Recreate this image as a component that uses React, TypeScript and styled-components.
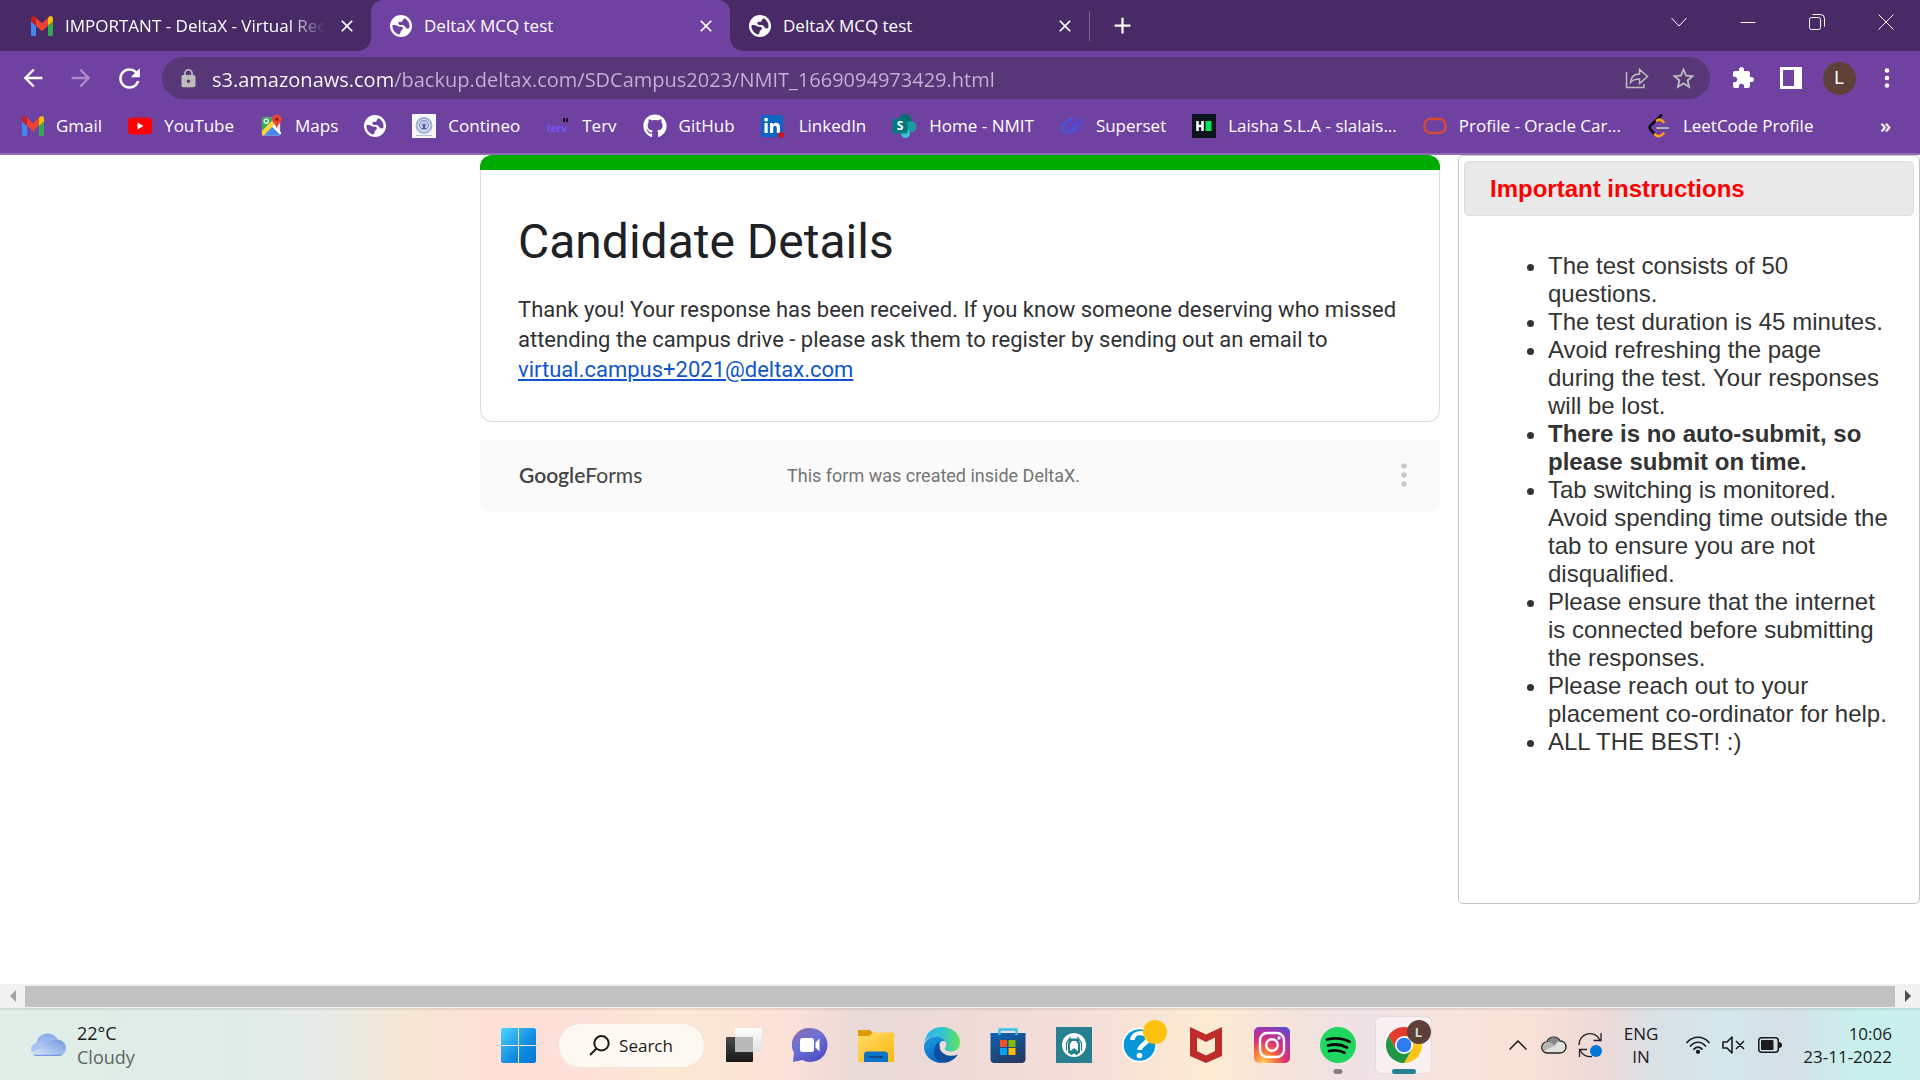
import React from 'react';
import styled, { createGlobalStyle } from 'styled-components';
import { FaGithub } from 'react-icons/fa';
import { MdExtension, MdStarBorder, MdArrowBack, MdArrowForward, MdRefresh, MdLock, MdClose, MdAdd } from 'react-icons/md';

const UI_FONT = '"Segoe UI", "Open Sans", "Noto Sans", sans-serif';

const GlobalStyle = createGlobalStyle`
  * { box-sizing: border-box; }
  html, body { margin: 0; padding: 0; }
  body { background: #fff; font-family: ${UI_FONT}; overflow: hidden; }
  button { border: 0; margin: 0; padding: 0; background: none; color: inherit; font: inherit; }
  svg { display: block; flex: none; }
`;

const Screen = styled.div`
  display: flex;
  flex-direction: column;
  min-height: 100vh;
`;

/* ---------- browser chrome ---------- */

const TabStrip = styled.header`
  display: flex;
  height: 51px;
  padding-left: 12px;
  background: #472a66;
  color: #fff;
`;

const Tab = styled.div<{ $active?: boolean }>`
  position: relative;
  display: flex;
  align-items: center;
  gap: 12px;
  width: 359px;
  padding: 0 14px 0 19px;
  background: ${p => (p.$active ? '#6f42a1' : 'transparent')};
  border-radius: 12px 12px 0 0;
  &::before, &::after {
    content: '';
    display: ${p => (p.$active ? 'block' : 'none')};
    position: absolute;
    bottom: 0;
    width: 12px;
    height: 12px;
  }
  &::before { left: -12px; background: radial-gradient(circle at 0 0, #472a66 11px, #6f42a1 12px); }
  &::after { right: -12px; background: radial-gradient(circle at 100% 0, #472a66 11px, #6f42a1 12px); }
`;

const TabTitle = styled.span<{ $fade?: boolean }>`
  flex: 1;
  min-width: 0;
  white-space: nowrap;
  font-size: 17px;
  line-height: 24px;
  ${p => p.$fade && 'mask-image: linear-gradient(90deg, #000 86%, transparent 100%);'}
`;

const TabClose = styled.button`
  display: grid;
  place-items: center;
  width: 20px;
  height: 24px;
`;

const TabDivider = styled.div`
  align-self: center;
  width: 1px;
  height: 30px;
  background: #7b6494;
`;

const NewTab = styled.button`
  display: grid;
  place-items: center;
  width: 64px;
`;

const WindowButtons = styled.div`
  display: flex;
  height: 43px;
  margin-left: auto;
`;

const WindowButton = styled.button`
  display: grid;
  place-items: center;
  width: 69px;
`;

const Toolbar = styled.div`
  display: flex;
  align-items: center;
  height: 51px;
  padding: 3px 9px 0;
  background: #6f42a1;
  color: #fff;
`;

const ToolButton = styled.button<{ $dim?: boolean }>`
  display: grid;
  place-items: center;
  width: 48px;
  height: 48px;
  color: ${p => (p.$dim ? '#a88dc8' : '#fff')};
`;

const Omnibox = styled.div`
  display: flex;
  align-items: center;
  flex: 1;
  height: 42px;
  margin: 0 9px;
  padding: 0 3px 0 16px;
  border-radius: 21px;
  background: #583778;
  color: #bdbdbd;
`;

const Address = styled.input`
  flex: 1;
  min-width: 0;
  height: 34px;
  margin-left: 13px;
  padding: 2px 0 0;
  border: 0;
  outline: 0;
  font: 20px/32px ${UI_FONT};
  color: transparent;
  background: linear-gradient(90deg, #fff 181px, #c3b2d6 181px);
  background-clip: text;
  -webkit-background-clip: text;
`;

const OmniButton = styled.button`
  display: grid;
  place-items: center;
  width: 47px;
  height: 42px;
`;

const Avatar = styled.span`
  display: grid;
  place-items: center;
  width: 33px;
  height: 33px;
  border-radius: 50%;
  background: #5d4037;
  color: #fff;
  font: 18px/1 Roboto, sans-serif;
`;

const BookmarkBar = styled.nav`
  display: flex;
  align-items: center;
  gap: 26px;
  height: 53px;
  padding: 0 29px 4px 22px;
  border-bottom: 2px solid #8f6bb6;
  background: #6f42a1;
  color: #fff;
`;

const Bookmark = styled.a`
  display: flex;
  align-items: center;
  gap: 12px;
  color: inherit;
  text-decoration: none;
  font-size: 17px;
  line-height: 24px;
  white-space: nowrap;
`;

const MoreBookmarks = styled.button`
  margin-left: auto;
  font-size: 20px;
  font-weight: 600;
  line-height: 24px;
`;

/* ---------- page ---------- */

const Page = styled.main`
  flex: 1;
  display: grid;
  grid-template-columns: 1fr 2fr 1fr;
  align-items: start;
  background: #fff;
`;

const FormColumn = styled.section`
  grid-column: 2;
  font-family: Roboto, sans-serif;
`;

const CardStripe = styled.div`
  height: 15px;
  border-radius: 12px 12px 0 0;
  background: #00ab00;
`;

const Card = styled.article`
  padding: 40px 36px 36px 37px;
  border: 1px solid #dadce0;
  border-top: 0;
  border-radius: 0 0 12px 12px;
`;

const CardTitle = styled.h1`
  margin: 0 0 21px;
  color: #202124;
  font-size: 48px;
  font-weight: 400;
  line-height: 64px;
`;

const CardText = styled.p`
  margin: 0;
  color: #303134;
  font-size: 22px;
  line-height: 30px;
  a { color: #1155cc; }
`;

const FormFooter = styled.footer`
  display: grid;
  grid-template-columns: 268px 1fr auto;
  align-items: center;
  height: 72px;
  margin-top: 18px;
  padding: 0 32px 2px 39px;
  border-radius: 0 0 12px 12px;
  background: #fafafa;
  color: #757575;
  font-size: 18px;
`;

const FormsLogo = styled.a`
  color: #444;
  font: 21px/30px Lato, sans-serif;
  text-decoration: none;
  b { font-weight: 600; }
`;

const Panel = styled.aside`
  min-height: 749px;
  margin-left: 18px;
  padding: 5px;
  border: 1px solid #c4c4c4;
  border-radius: 5px;
  font-family: Arial, "Liberation Sans", sans-serif;
  font-size: 24px;
  line-height: 28px;
  color: #333;
`;

const PanelHeading = styled.h2`
  margin: 0;
  padding: 13px 25px 12px;
  border: 1px solid #ddd;
  border-radius: 5px;
  background: #e9e9e9;
  color: #f00;
  font-size: 24px;
  font-weight: 700;
  line-height: 28px;
`;

const Instructions = styled.ul`
  margin: 36px 0 0;
  padding: 0 20px 0 84px;
`;

const ScrollTrack = styled.div`
  display: flex;
  align-items: center;
  height: 24px;
  background: #f1f1f1;
`;

const ScrollArrow = styled.button<{ $off?: boolean }>`
  display: grid;
  place-items: center;
  width: 25px;
  height: 24px;
  color: ${p => (p.$off ? '#a3a3a3' : '#505050')};
`;

const ScrollThumb = styled.div`
  flex: 1;
  height: 21px;
  background: #c1c1c1;
`;

/* ---------- taskbar ---------- */

const Taskbar = styled.footer`
  display: grid;
  grid-template-columns: 1fr auto 1fr;
  height: 72px;
  border-top: 2px solid rgba(90, 90, 80, 0.12);
  background: linear-gradient(90deg, #dfeee6 0, #e0ece8 12%, #e7ebe8 17%, #f5e7d3 21%, #fde1d8 25%, #fde1d8 31%,
    #fbe8d3 35%, #fde1d8 41%, #e8d8d7 45%, #f0dcd8 52%, #f6dfd8 57%, #fcebd1 63%, #f3e2dd 68%, #efe1e6 71%,
    #f8e4da 76%, #f8e0d6 80%, #ecd9d8 83.5%, #dbe0e4 86%, #d2e8eb 90%, #d5dfe6 93%, #c7f1ed 97%, #cbefee 100%);
  background-origin: border-box;
  color: #1b1b1b;
`;

const Weather = styled.button`
  display: flex;
  align-items: center;
  gap: 11px;
  padding-left: 30px;
  text-align: left;
  font-size: 18px;
  line-height: 24px;
  small { display: block; font-size: inherit; color: #5f6663; }
`;

const Apps = styled.div`
  display: flex;
  align-items: center;
  padding-left: 2px;
`;

const AppButton = styled.button<{ $mark?: 'dot' | 'bar' }>`
  position: relative;
  display: grid;
  place-items: center;
  width: 66px;
  height: 70px;
  &::after {
    content: '';
    display: ${p => (p.$mark ? 'block' : 'none')};
    position: absolute;
    left: 50%;
    bottom: 6px;
    width: ${p => (p.$mark === 'bar' ? 24 : 9)}px;
    height: 5px;
    border-radius: 3px;
    transform: translateX(-50%);
    background: ${p => (p.$mark === 'bar' ? '#258292' : '#878080')};
  }
`;

const ActiveTile = styled.span`
  display: grid;
  place-items: center;
  width: 57px;
  height: 58px;
  border: 1px solid #e7dcdf;
  border-radius: 6px;
  background: #f8f0f1;
`;

const Badge = styled.span<{ $color: string }>`
  position: absolute;
  top: 10px;
  right: 6px;
  display: grid;
  place-items: center;
  width: 24px;
  height: 24px;
  border-radius: 50%;
  background: ${p => p.$color};
  color: #ddd;
  font: 700 13px/1 Roboto, sans-serif;
`;

const SearchButton = styled.button`
  display: flex;
  align-items: center;
  justify-content: center;
  gap: 9px;
  width: 147px;
  height: 45px;
  margin: 0 6px;
  border: 1px solid #f3e3d8;
  border-radius: 23px;
  background: #fef8f2;
  font-size: 17px;
`;

const Tray = styled.div`
  display: flex;
  align-items: center;
  justify-content: flex-end;
  padding-right: 28px;
  font-size: 17px;
  line-height: 23px;
`;

const TrayButton = styled.button<{ $w: number }>`
  display: grid;
  place-items: center;
  width: ${p => p.$w}px;
  height: 66px;
`;

const Clock = styled.button`
  width: 98px;
  text-align: right;
`;

/* ---------- drawings ---------- */

const Gmail = () => (
  <svg width="22" height="20" viewBox="52 42 88 66" preserveAspectRatio="none">
    <path fill="#4285f4" d="M58 108h14V74L52 59v43c0 3.32 2.69 6 6 6" />
    <path fill="#34a853" d="M120 108h14c3.32 0 6-2.69 6-6V59l-20 15" />
    <path fill="#fbbc04" d="M120 48v26l20-15v-8c0-7.42-8.47-11.65-14.4-7.2" />
    <path fill="#ea4335" d="M72 74V48l24 18 24-18v26L96 92" />
    <path fill="#c5221f" d="M52 51v8l20 15V48l-5.6-4.2c-5.94-4.45-14.4-.22-14.4 7.2" />
  </svg>
);

const Globe = ({ sea }: { sea: string }) => (
  <svg width="22" height="22" viewBox="0 0 24 24">
    <circle cx="12" cy="12" r="12" fill="#fff" />
    <path fill={sea} d="M2.7 11.2c2.2-.4 4.2-.2 5.8.8 1.3.8 2.6.9 4.2.9 1.4.3 1.8 2.2.7 3.3-1 1-1.7 1.2-1.9 2.6-.2 1.3-.7 2.2-1.7 2.4C5.3 20 2.3 15.8 2.7 11.2z" />
    <path fill={sea} d="M15.8 3.5c3.3 1.6 5.5 4.7 5.500 8.500 0 .9-.1 1.500-.4 2.300-1.100.9-2.500.6-3.500-.4-1-1.100-1.800-2.700-3.400-3-1.400-.3-3.500.2-4.600-.9-.8-1-.2-2.500 1.100-2.600 1-.1 1.800.5 2.700-.2.9-.8.5-2.400 2.600-3.700z" />
  </svg>
);

const YouTube = () => (
  <svg width="24" height="24" viewBox="0 0 24 24">
    <rect y="3.5" width="24" height="17" rx="4" fill="#f00" />
    <path d="M9.500 8.500v7l6-3.500z" fill="#fff" />
  </svg>
);

const Maps = () => (
  <svg width="23" height="24" viewBox="0 0 24 24">
    <rect x="2" y="3" width="19" height="19" rx="2" fill="#ece8df" />
    <path d="M4 3h12L2 18V5a2 2 0 0 1 2-2z" fill="#34a853" />
    <path d="M3 21.500 12 12l9 9.500a2 2 0 0 1-1 .5H4z" fill="#4a89f3" />
    <path d="M2 17 14.500 5l3 3L4 22H2z" fill="#fdd835" />
    <path d="m12.500 12.500 2-2L22 19v2z" fill="#fff" />
    <circle cx="6.5" cy="7" r="2.2" fill="none" stroke="#fff" strokeWidth="1.3" />
    <path d="M17.500 0a5 5 0 0 0-5 5c0 4 4.300 4.500 5 10 .7-5.500 5-6 5-10a5 5 0 0 0-5-5z" fill="#ea4335" />
    <circle cx="17.5" cy="5" r="1.8" fill="#8c1f17" />
  </svg>
);

const Contineo = () => (
  <svg width="24" height="24" viewBox="0 0 24 24">
    <rect width="24" height="24" fill="#f7f8fb" />
    <circle cx="12" cy="11.500" r="7.5" fill="#d3dbed" stroke="#a5b2d6" strokeWidth="2" />
    <circle cx="12" cy="11" r="4.5" fill="#c3cde6" stroke="#7d8dbf" strokeWidth="1" />
    <path d="M9.500 10h5l-1.500 1.500v2.500h1.500v1h-5v-1H11v-2.500z" fill="#4c62a7" />
    <path d="M4 21.500h16" stroke="#b4bedb" strokeWidth="1.2" />
  </svg>
);

const Terv = () => (
  <svg width="24" height="24" viewBox="0 0 24 24">
    <text x="1" y="18" fontFamily="Liberation Sans Narrow, Liberation Sans" fontWeight="700" fontSize="11" fill="#7257fa">terv</text>
    <path d="M17 4h2v4h-2zM20 4h2v4h-2z" fill="#120c1c" />
  </svg>
);

const LinkedIn = () => (
  <svg width="26" height="24" viewBox="0 0 26 24">
    <rect x="0" y="1" width="22" height="22" rx="1.5" fill="#0a66c2" />
    <path d="M3.500 9h3.200v10H3.500zM9 9h3v1.400c1.600-2.500 7-2.300 7 2.600v6h-3.200v-5.300c0-2.800-3.600-2.600-3.600 0V19H9z" fill="#fff" />
    <circle cx="5.1" cy="5.700" r="1.9" fill="#fff" />
    <circle cx="20" cy="21" r="3" fill="#d11124" />
  </svg>
);

const SharePoint = () => (
  <svg width="25" height="24" viewBox="0 0 24 24">
    <circle cx="12.5" cy="6.5" r="6.5" fill="#036c70" />
    <circle cx="18.5" cy="12.5" r="5.5" fill="#1a9ba1" />
    <circle cx="13" cy="19.5" r="4.5" fill="#37c6d0" />
    <rect y="4.5" width="15" height="15" rx="1.5" fill="#03787c" />
    <text x="7.5" y="16" textAnchor="middle" fontFamily="Open Sans" fontWeight="700" fontSize="12" fill="#fff">S</text>
  </svg>
);

const Superset = () => (
  <svg width="24" height="24" viewBox="0 0 24 24" fill="none" strokeWidth="1.8" strokeLinecap="round">
    <path d="M11 4 4.500 9.500C-.5 14 4 21 9.500 18.500L17 13" stroke="#405ce0" />
    <path d="M20 5.500 12.500 11M13 4.500 7 10c-2.500 3 0 6 3 4.500l7.500-5.500c3-2 5 .5 3.500 3l-6.500 7.500" stroke="#5146da" />
  </svg>
);

const HackerBadge = () => (
  <svg width="24" height="24" viewBox="0 0 24 24">
    <rect width="24" height="24" fill="#0e141e" />
    <path d="M5.500 7v10M10.500 7v10M5 12h5.500" stroke="#fff" strokeWidth="2.6" />
    <rect x="13.5" y="7" width="6" height="10" fill="#05e25b" />
  </svg>
);

const Oracle = () => (
  <svg width="24" height="24" viewBox="0 0 24 24">
    <rect x="1.5" y="5" width="21" height="14" rx="6" fill="none" stroke="#d9492f" strokeWidth="2.400" />
  </svg>
);

const LeetCode = () => (
  <svg width="24" height="24" viewBox="0 0 24 24" fill="none" strokeWidth="2.6" strokeLinecap="round">
    <path d="M14 1.500 3.500 11.500q-1.500 2 0 4l4.500 5" stroke="#0b0710" />
    <path d="m10 6.500q3-2.500 6.500 1.500M8 20.500q4 4 8.500-1" stroke="#ffa116" />
    <path d="M10 14h11" stroke="#b3b3b3" strokeWidth="2" />
  </svg>
);

const ShareIcon = () => (
  <svg width="24" height="24" viewBox="0 0 24 24" fill="none" stroke="currentColor" strokeWidth="1.500">
    <path d="M1.500 6v15.500H19V18M5.500 16.500c.5-6 4-8.500 9-8.500V3.500l8 7-8 7V13c-4 0-7 1-9 3.500z" />
  </svg>
);

const SidePanelIcon = () => (
  <svg width="22" height="22" viewBox="0 0 22 22">
    <path fillRule="evenodd" d="M0 0h22v22H0zM3 3v16h11V3z" fill="#fff" />
  </svg>
);

const Dots = ({ r, gap, fill }: { r: number; gap: number; fill: string }) => (
  <svg width="8" height="28" viewBox="-4 -14 8 28" fill={fill}>
    <circle cy={-gap} r={r} />
    <circle r={r} />
    <circle cy={gap} r={r} />
  </svg>
);

const Stroke16 = ({ d }: { d: string }) => (
  <svg width="16" height="16" viewBox="0 0 16 16" fill="none" stroke="#fff" strokeWidth="1">
    <path d={d} />
  </svg>
);

const Cloud = () => (
  <svg width="36" height="24" viewBox="0 0 36 24">
    <defs>
      <linearGradient id="cl" x2="0" y2="1"><stop stopColor="#86a8ea" /><stop offset="1" stopColor="#d3e1f8" /></linearGradient>
      <linearGradient id="cr" x1="1" x2="0" y2="1"><stop stopColor="#6f97e0" /><stop offset="1" stopColor="#dce8fb" /></linearGradient>
    </defs>
    <path d="M6 11C7 4 12 .5 17.500.5c6 0 10 3.500 11 9L27 22H9z" fill="url(#cl)" />
    <path d="M7 10c5 0 9 3 9 12H7a6 6 0 0 1 0-12z" fill="#a9c3f2" />
    <path d="M21 8c3-3 15-2 15 7 0 5-4 8-8 8H7c-3 0-5-1.500-6.500-4C8 18 14 8 21 8z" fill="url(#cr)" />
    <path d="M3 21.500c1 1 2.500 1.500 4 1.500h21c2 0 4-.8 5.500-2-3 1-27 1-30.500.5z" fill="#7196e4" />
  </svg>
);

const Start = () => (
  <svg width="35" height="35" viewBox="0 0 35 35">
    <defs><linearGradient id="win" gradientUnits="userSpaceOnUse" x1="0" y1="0" x2="35" y2="35"><stop stopColor="#4fd4ff" /><stop offset=".6" stopColor="#0f8be0" /><stop offset="1" stopColor="#0078d4" /></linearGradient></defs>
    <path d="M1.500 0H17v17H0V1.500zM18 0h15.500L35 1.500V17H18zM0 18h17v17H1.500L0 33.500zM18 18h17v15.500L33.500 35H18z" fill="url(#win)" />
  </svg>
);

const TaskView = () => (
  <svg width="36" height="34" viewBox="0 0 36 34">
    <defs>
      <linearGradient id="tv" x2="0" y2="1"><stop stopColor="#4a4a48" /><stop offset="1" stopColor="#171717" /></linearGradient>
      <linearGradient id="tw" x2="0" y2="1"><stop stopColor="#fcfcfc" /><stop offset="1" stopColor="#e2e2e2" /></linearGradient>
    </defs>
    <rect y="9" width="27" height="25" rx="1" fill="url(#tv)" />
    <rect x="9" width="27" height="24" rx="1" fill="url(#tw)" />
    <rect x="9" y="9" width="18" height="15" fill="#b9b9b9" />
  </svg>
);

const Chat = () => (
  <svg width="36" height="36" viewBox="0 0 36 36">
    <defs><linearGradient id="ch" x2=".6" y2="1"><stop stopColor="#8f68a8" /><stop offset=".5" stopColor="#6a73d8" /><stop offset="1" stopColor="#5350c4" /></linearGradient></defs>
    <path d="M18.500 1a17 17 0 1 1-8 32L1 35l1-9A17 17 0 0 1 18.500 1z" fill="url(#ch)" />
    <rect x="8" y="11" width="14" height="14" rx="2.5" fill="#fff" />
    <path d="m23.500 15.500 4-4v13l-4-4z" fill="#fff" />
  </svg>
);

const Folder = () => (
  <svg width="36" height="33" viewBox="0 0 36 33">
    <defs><linearGradient id="fo" x2="1" y2="1"><stop stopColor="#ffdc6b" /><stop offset="1" stopColor="#fcb70c" /></linearGradient></defs>
    <path d="M0 1h12l4 4-3 6H0z" fill="#dd9b05" />
    <path d="M0 7h11l4-3.500h21V33H0z" fill="url(#fo)" />
    <path d="M6 33v-7a3.500 3.500 0 0 1 3.500-3.500h17A3.500 3.500 0 0 1 30 26v7z" fill="#0b74c9" />
    <path d="M11 28h14" stroke="#074a91" strokeWidth="2" />
  </svg>
);

const Edge = () => (
  <svg width="36" height="36" viewBox="0 0 36 36">
    <defs>
      <linearGradient id="e1" x2="1"><stop stopColor="#2fb4ec" /><stop offset=".5" stopColor="#30c5cf" /><stop offset="1" stopColor="#63e35a" /></linearGradient>
      <linearGradient id="e2" x2=".4" y2="1"><stop stopColor="#1b9de2" /><stop offset="1" stopColor="#0a68c8" /></linearGradient>
    </defs>
    <path d="M.5 15C2 5 9.500 0 18 0c10.500 0 18 7 18 15.500 0 6-4 9-9 9-4 0-6.500-1.500-6.500-2.800 0-1 1.700-1.700 1.700-4.700 0-4-4-7.500-10-7.500C7 9.500 2.500 11 .5 15z" fill="url(#e1)" />
    <path d="M22 16.500C21 12 17 9.500 12 9.500 5 9.500 0 14 0 20c0 9 8 16 18 16-5-3-6-9-3.500-13.500C16.500 19 18 17 22 16.500z" fill="url(#e2)" />
    <path d="M14.500 15c-6 5-6.500 16 1.500 20.500 7 1.500 14-2 18-8-8 3.500-17.500 0-18.500-7.500-.3-2-.6-3-1-5z" fill="#0f4f9c" />
    <path d="M18 14.200c3-.8 4.800 1.300 4.200 3.800-.5 2-1.700 2.600-1.700 3.700 0 1 1.500 2.300 4 2.700-5 .5-9-2.500-8.900-6.500 0-1.800.9-3.200 2.400-3.700z" fill="#f0dcd8" />
  </svg>
);

const Store = () => (
  <svg width="36" height="36" viewBox="0 0 36 36">
    <defs><linearGradient id="st" x2=".5" y2="1"><stop stopColor="#0a66b5" /><stop offset="1" stopColor="#253a66" /></linearGradient></defs>
    <path d="M.5 6h35v26a4 4 0 0 1-4 4h-27a4 4 0 0 1-4-4z" fill="url(#st)" />
    <path d="M9.500 8V2.500h17V8" fill="none" stroke="#35c1f1" strokeWidth="2.4" />
    <path d="M10 13h7v7h-7z" fill="#f25022" /><path d="M18.500 13h7v7h-7z" fill="#7fba00" />
    <path d="M10 21h7v7h-7z" fill="#00a4ef" /><path d="M18.500 21h7v7h-7z" fill="#ffb900" />
  </svg>
);

const TealApp = () => (
  <svg width="36" height="36" viewBox="0 0 36 36">
    <rect width="36" height="36" fill="#26808f" />
    <circle cx="18" cy="18" r="12" fill="#fff" />
    <path d="M10.500 23.500v-7.500l4-6M25.500 23.500v-7.500l-4-6" fill="none" stroke="#26808f" strokeWidth="1.3" />
    <path d="M13.500 11.500h9l1.500 5V26h-2V17l-2-3h-4l-2 3v9h-2v-9.500z" fill="#26808f" />
    <path d="M13.500 27v-2.500L18 21l4.500 3.500V27l-2.200 1L18 26.500 15.700 28z" fill="#26808f" />
  </svg>
);

const Help = () => (
  <svg width="36" height="36" viewBox="0 0 36 36">
    <circle cx="17.5" cy="18" r="17.5" fill="#fff" />
    <circle cx="17.5" cy="18" r="15.8" fill="#0797d8" />
    <path d="M10.500 13c0-9 15-9 15-1 0 5-8 6-8 11" fill="none" stroke="#fff" strokeWidth="4.500" />
    <circle cx="17.5" cy="28.500" r="2.8" fill="#fff" />
  </svg>
);

const McAfee = () => (
  <svg width="32" height="36" viewBox="0 0 32 36">
    <path d="M0 0l16 7.500L32 0v29l-16 7L0 29zM7 10.500V24l9 4.500 9-4.500V10.500L16 15z" fillRule="evenodd" fill="#bd2b2b" />
  </svg>
);

const Instagram = () => (
  <svg width="36" height="36" viewBox="0 0 36 36">
    <defs><radialGradient id="ig" cx=".25" cy="1" r="1.15"><stop stopColor="#ffd35e" /><stop offset=".3" stopColor="#f9743a" /><stop offset=".55" stopColor="#dd2f75" /><stop offset=".8" stopColor="#a534b0" /><stop offset="1" stopColor="#5b4bcb" /></radialGradient></defs>
    <rect width="36" height="36" rx="5" fill="url(#ig)" />
    <rect x="6" y="6" width="24" height="24" rx="7" fill="none" stroke="#fff" strokeWidth="2.4" />
    <circle cx="18" cy="18" r="5.8" fill="none" stroke="#fff" strokeWidth="2.4" />
    <circle cx="25" cy="11" r="1.7" fill="#fff" />
  </svg>
);

const Spotify = () => (
  <svg width="36" height="36" viewBox="0 0 36 36">
    <circle cx="18" cy="18" r="18" fill="#1fd760" />
    <path d="M7 12.500c8-2 16-1.300 22.500 2.300M8 18.500c7-1.800 13.500-1 19 2M9 24c6-1.300 11-.7 15.500 1.800" fill="none" stroke="#0b0b0b" strokeWidth="2.8" strokeLinecap="round" />
  </svg>
);

const Chrome = () => (
  <svg width="36" height="36" viewBox="0 0 48 48">
    <path d="M24 12h20.780A24 24 0 0 0 3.220 12l10.390 18z" fill="#e33b2e" />
    <path d="M34.390 30 24 48a24 24 0 0 0 20.780-36H24z" fill="#fcc51c" />
    <path d="M13.610 30 3.220 12A24 24 0 0 0 24 48l10.390-18z" fill="#229545" />
    <circle cx="24" cy="24" r="12" fill="#fff" />
    <circle cx="24" cy="24" r="9.8" fill="#2f7cf0" />
  </svg>
);

const Magnifier = () => (
  <svg width="21" height="21" viewBox="0 0 21 21" fill="none" stroke="#1b1b1b" strokeWidth="2">
    <circle cx="12.5" cy="8.3" r="7.2" /><path d="M7.500 13.500 1 20" />
  </svg>
);

const OneDrive = () => (
  <svg width="26" height="18" viewBox="0 0 26 18">
    <path d="M6.500 17A5.500 5.500 0 0 1 6 6c2-6 10-6.500 13-1 4 0 6 3 6 6s-2.500 6-6 6z" fill="#e2e2e2" stroke="#222" strokeWidth="1.4" />
    <path d="M6 6c3 0 5 1.500 8 3.500L3 15C0 11 3 6 6 6z" fill="#b5b5b5" />
    <path d="M6.500 6c2-6 9.500-6 12-1-2 0-3.500 2.500-4.500 4.500C11 7.500 9 6 6.500 6z" fill="#858585" />
  </svg>
);

const Sync = () => (
  <svg width="24" height="26" viewBox="0 0 24 26" fill="none" stroke="#222" strokeWidth="1.3">
    <path d="M1 13A11 11 0 0 1 22 8M23 1v7.500h-7.500M14 24.500A11 11 0 0 1 2 18M1.500 25v-7.500H9" />
    <circle cx="18" cy="19" r="6" fill="#0078d7" stroke="none" />
  </svg>
);

const Wifi = () => (
  <svg width="24" height="18" viewBox="0 0 24 18" fill="none" stroke="#1b1b1b" strokeWidth="1.7" strokeLinecap="round">
    <path d="M1 6.500c6-7 16-7 22 0M4.500 10c4.500-5 10.500-5 15 0M8 13.200c2.500-2.700 5.500-2.700 8 0" />
    <circle cx="12" cy="15.800" r="1.3" fill="#1b1b1b" />
  </svg>
);

const Muted = () => (
  <svg width="24" height="18" viewBox="0 0 24 18" fill="none" stroke="#1b1b1b" strokeWidth="1.6" strokeLinejoin="round">
    <path d="M1 6h4l5-5v16l-5-5H1zM14 5l8 8M22 5l-8 8" />
  </svg>
);

const Battery = () => (
  <svg width="24" height="16" viewBox="0 0 24 16">
    <rect x=".8" y=".8" width="19.5" height="14.4" rx="3" fill="none" stroke="#1b1b1b" strokeWidth="1.5" />
    <rect x="3" y="3" width="12.500" height="10" rx="1" fill="#1b1b1b" />
    <path d="M21 5q3 .5 3 3t-3 3z" fill="#1b1b1b" />
  </svg>
);

/* ---------- content ---------- */

const bookmarks: { label: string; icon: React.ReactNode; name?: string }[] = [
  { label: 'Gmail', icon: <Gmail /> },
  { label: 'YouTube', icon: <YouTube /> },
  { label: 'Maps', icon: <Maps /> },
  { label: '', name: 'Site', icon: <Globe sea="#6f42a1" /> },
  { label: 'Contineo', icon: <Contineo /> },
  { label: 'Terv', icon: <Terv /> },
  { label: 'GitHub', icon: <FaGithub size={24} /> },
  { label: 'LinkedIn', icon: <LinkedIn /> },
  { label: 'Home - NMIT', icon: <SharePoint /> },
  { label: 'Superset', icon: <Superset /> },
  { label: 'Laisha S.L.A - slalais...', icon: <HackerBadge /> },
  { label: 'Profile - Oracle Car...', icon: <Oracle /> },
  { label: 'LeetCode Profile', icon: <LeetCode /> },
];

const instructions: React.ReactNode[] = [
  'The test consists of 50 questions.',
  'The test duration is 45 minutes.',
  'Avoid refreshing the page during the test. Your responses will be lost.',
  <b>There is no auto-submit, so please submit on time.</b>,
  'Tab switching is monitored. Avoid spending time outside the tab to ensure you are not disqualified.',
  'Please ensure that the internet is connected before submitting the responses.',
  'Please reach out to your placement co-ordinator for help.',
  'ALL THE BEST! :)',
];

const apps: { name: string; icon: React.ReactNode; mark?: 'dot' | 'bar'; badge?: string; badgeText?: string }[] = [
  { name: 'Task View', icon: <TaskView /> },
  { name: 'Chat', icon: <Chat /> },
  { name: 'File Explorer', icon: <Folder /> },
  { name: 'Edge', icon: <Edge /> },
  { name: 'Store', icon: <Store /> },
  { name: 'Support Assistant', icon: <TealApp /> },
  { name: 'Help', icon: <Help />, badge: '#ffc20e' },
  { name: 'McAfee', icon: <McAfee /> },
  { name: 'Instagram', icon: <Instagram /> },
  { name: 'Spotify', icon: <Spotify />, mark: 'dot' },
  { name: 'Chrome', icon: <ActiveTile><Chrome /></ActiveTile>, mark: 'bar', badge: '#5d4037', badgeText: 'L' },
];

export default function App() {
  return (
    <>
      <GlobalStyle />
      <Screen>
        <TabStrip>
          <Tab>
            <Gmail />
            <TabTitle $fade>IMPORTANT - DeltaX - Virtual Rec</TabTitle>
            <TabClose aria-label="Close tab"><MdClose size={20} /></TabClose>
          </Tab>
          <Tab $active>
            <Globe sea="#6f42a1" />
            <TabTitle>DeltaX MCQ test</TabTitle>
            <TabClose aria-label="Close tab"><MdClose size={20} /></TabClose>
          </Tab>
          <Tab>
            <Globe sea="#472a66" />
            <TabTitle>DeltaX MCQ test</TabTitle>
            <TabClose aria-label="Close tab"><MdClose size={20} /></TabClose>
          </Tab>
          <TabDivider />
          <NewTab aria-label="New tab"><MdAdd size={27} /></NewTab>
          <WindowButtons>
            <WindowButton aria-label="Search tabs"><Stroke16 d="M.5 4 8 12l7.500-8" /></WindowButton>
            <WindowButton aria-label="Minimize"><Stroke16 d="M.5 8.500h15" /></WindowButton>
            <WindowButton aria-label="Restore"><Stroke16 d="M2.500 3.500h7a2 2 0 0 1 2 2v8a2 2 0 0 1-2 2h-7a2 2 0 0 1-2-2v-8a2 2 0 0 1 2-2zM3.500.5h8a4 4 0 0 1 4 4v8" /></WindowButton>
            <WindowButton aria-label="Close"><Stroke16 d="m.5.5 15 15M15.500.5l-15 15" /></WindowButton>
          </WindowButtons>
        </TabStrip>

        <Toolbar>
          <ToolButton aria-label="Back"><MdArrowBack size={28} /></ToolButton>
          <ToolButton aria-label="Forward" $dim><MdArrowForward size={28} /></ToolButton>
          <ToolButton aria-label="Reload"><MdRefresh size={31} /></ToolButton>
          <Omnibox>
            <MdLock size={21} />
            <Address aria-label="Address" defaultValue="s3.amazonaws.com/backup.deltax.com/SDCampus2023/NMIT_1669094973429.html" />
            <OmniButton aria-label="Share"><ShareIcon /></OmniButton>
            <OmniButton aria-label="Bookmark this page"><MdStarBorder size={27} /></OmniButton>
          </Omnibox>
          <ToolButton aria-label="Extensions"><MdExtension size={24} /></ToolButton>
          <ToolButton aria-label="Side panel"><SidePanelIcon /></ToolButton>
          <ToolButton aria-label="Profile"><Avatar>L</Avatar></ToolButton>
          <ToolButton aria-label="Menu"><Dots r={2.3} gap={7.5} fill="#fff" /></ToolButton>
        </Toolbar>

        <BookmarkBar>
          {bookmarks.map(b => (
            <Bookmark key={b.label || b.name} href="#" aria-label={b.name}>
              {b.icon}
              {b.label && <span>{b.label}</span>}
            </Bookmark>
          ))}
          <MoreBookmarks aria-label="More bookmarks">»</MoreBookmarks>
        </BookmarkBar>

        <Page>
          <FormColumn>
            <CardStripe />
            <Card>
              <CardTitle>Candidate Details</CardTitle>
              <CardText>
                Thank you! Your response has been received. If you know someone deserving who missed attending the
                campus drive - please ask them to register by sending out an email to{' '}
                <a href="mailto:virtual.campus+2021@deltax.com">virtual.campus+2021@deltax.com</a>
              </CardText>
            </Card>
            <FormFooter>
              <FormsLogo href="#"><b>Google</b>Forms</FormsLogo>
              <span>This form was created inside DeltaX.</span>
              <button aria-label="Form options"><Dots r={2.8} gap={9} fill="#c8c8c8" /></button>
            </FormFooter>
          </FormColumn>
          <Panel>
            <PanelHeading>Important instructions</PanelHeading>
            <Instructions>
              {instructions.map((text, i) => <li key={i}>{text}</li>)}
            </Instructions>
          </Panel>
        </Page>

        <ScrollTrack>
          <ScrollArrow $off aria-label="Scroll left"><svg width="6" height="12"><path d="M6 0v12L0 6z" fill="currentColor" /></svg></ScrollArrow>
          <ScrollThumb />
          <ScrollArrow aria-label="Scroll right"><svg width="6" height="12"><path d="M0 0v12l6-6z" fill="currentColor" /></svg></ScrollArrow>
        </ScrollTrack>

        <Taskbar>
          <Weather>
            <Cloud />
            <span>22°C<small>Cloudy</small></span>
          </Weather>
          <Apps>
            <AppButton aria-label="Start"><Start /></AppButton>
            <SearchButton><Magnifier />Search</SearchButton>
            {apps.map(a => (
              <AppButton key={a.name} aria-label={a.name} $mark={a.mark}>
                {a.icon}
                {a.badge && <Badge $color={a.badge}>{a.badgeText}</Badge>}
              </AppButton>
            ))}
          </Apps>
          <Tray>
            <TrayButton $w={36} aria-label="Hidden icons">
              <svg width="18" height="10" viewBox="0 0 18 10" fill="none" stroke="#1b1b1b" strokeWidth="1.5"><path d="m.5 9.500 8.500-8.500 8.500 8.500" /></svg>
            </TrayButton>
            <TrayButton $w={36} aria-label="OneDrive"><OneDrive /></TrayButton>
            <TrayButton $w={36} aria-label="Update"><Sync /></TrayButton>
            <TrayButton $w={66}><span>ENG<br />IN</span></TrayButton>
            <TrayButton $w={48} aria-label="Network"><Wifi /></TrayButton>
            <TrayButton $w={24} aria-label="Volume"><Muted /></TrayButton>
            <TrayButton $w={48} aria-label="Battery"><Battery /></TrayButton>
            <Clock>10:06<br />23-11-2022</Clock>
          </Tray>
        </Taskbar>
      </Screen>
    </>
  );
}
